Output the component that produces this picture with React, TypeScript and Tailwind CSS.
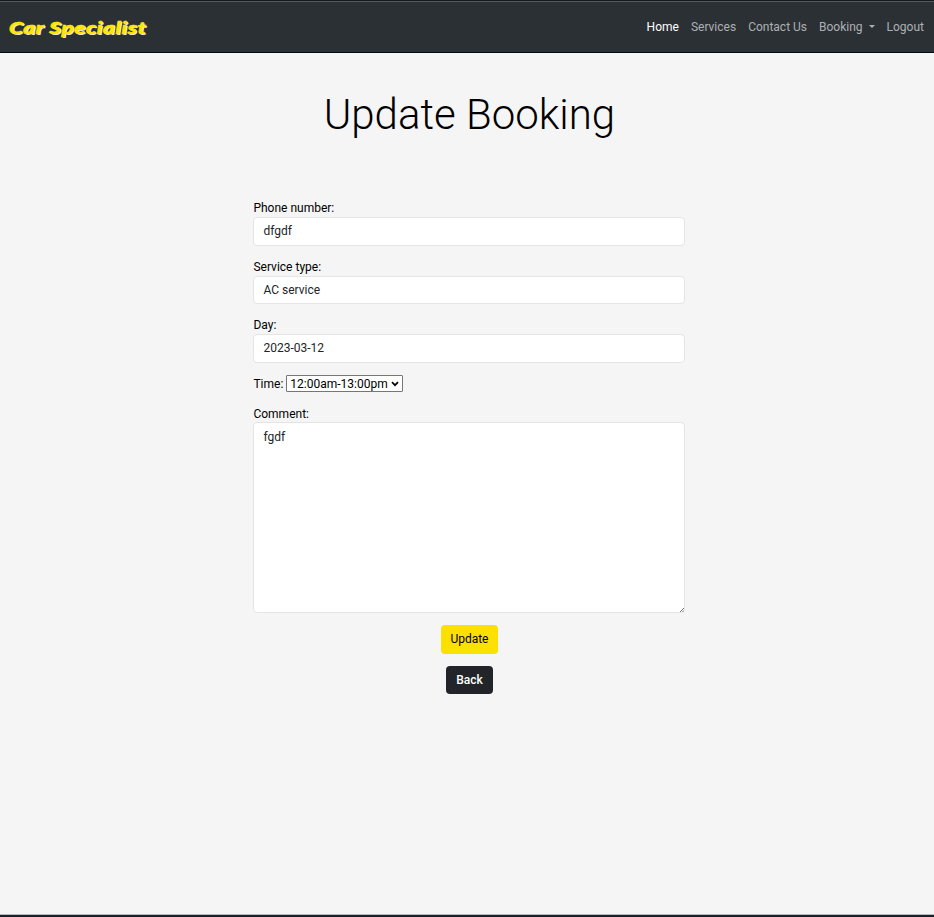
import React from "react";

const links = ["Services", "Contact Us"];

function Field({ label, value }: { label: string; value: string }) {
  return (
    <div className="mb-3 h-[46.5px]">
      <label className="block h-[18px] leading-[18px]">{label}</label>
      <input
        className="block h-[28.5px] w-full rounded-[4px] border border-[#e2e4e6] bg-white px-[9px] pb-[0.4px] text-[#212529] outline-none"
        defaultValue={value}
      />
    </div>
  );
}

export default function App() {
  return (
    <div className="flex h-[917px] w-full flex-col bg-[#f5f5f5] font-[Roboto,sans-serif] text-[12px] leading-[18px] text-black">
      <nav className="flex h-[53px] shrink-0 items-center justify-between border-t border-b border-t-[#15191e] border-b-[#080719] bg-[#2b3035] pr-[10px] pl-[9px] shadow-[inset_0_1px_0_#53585e]">
        <a className="origin-left scale-x-[1.34] pt-[2px] font-[Lato,sans-serif] text-[17px] leading-6 font-black tracking-[0.36px] whitespace-nowrap text-[#ffe600] italic [-webkit-text-stroke:0.6px_#ffe600] [text-shadow:1px_1px_0_#e5e5e5]">
          Car Specialist
        </a>
        <div className="flex gap-3 text-[#adb0b3]">
          <a className="text-white">Home</a>
          {links.map((l) => (
            <a key={l}>{l}</a>
          ))}
          <a className="flex items-center">
            Booking
            <span className="ml-[6px] border-x-[3.5px] border-t-[3.5px] border-x-transparent border-t-[#adb0b3]" />
          </a>
          <a>Logout</a>
        </div>
      </nav>
      <main className="flex grow flex-col pl-[4.9px]">
        <h1 className="mt-[37px] h-[50px] text-center text-[42px] leading-[50px] font-light">Update Booking</h1>
        <form className="mx-auto mt-[59px] flex w-[432px] flex-col">
          <Field label="Phone number:" value="dfgdf" />
          <Field label="Service type:" value="AC service" />
          <Field label="Day:" value="2023-03-12" />
          <div className="mb-3 flex h-[18px] items-center">
            <label>Time:</label>
            <div className="ml-[3px] flex h-[17px] w-[117px] items-center justify-between rounded-[1px] border border-[#767676] bg-white pr-[3px] pl-[3px]">
              <span>12:00am-13:00pm</span>
              <svg width="8" height="6" viewBox="0 0 8 6" fill="none">
                <path d="M1 1.2 4 4.2 7 1.2" stroke="black" strokeWidth="1.7" />
              </svg>
            </div>
          </div>
          <label className="h-[17.4px]">Comment:</label>
          <div className="relative">
            <textarea
              className="block h-[191.5px] w-full resize-none rounded-[4px] border border-[#e2e4e6] bg-white px-[9px] py-[5px] text-[#212529] outline-none"
              defaultValue="fgdf"
            />
            <svg className="absolute right-[1px] bottom-[1px]" width="4" height="4" viewBox="0 0 4 4" stroke="#555" strokeWidth="0.8">
              <path d="M0 4 4 0M2.4 4 4 2.4" />
            </svg>
          </div>
          <button type="button" className="mt-3 h-[29px] w-[57px] self-center rounded-[4px] bg-[#fce100] pb-px">
            Update
          </button>
          <button type="button" className="mt-3 h-[28px] w-[47px] self-center rounded-[4px] bg-[#212529] font-medium text-white">
            Back
          </button>
        </form>
      </main>
      <footer className="h-[3px] shrink-0 border-t border-t-[#b5b9bd] bg-[#17212a]" />
    </div>
  );
}
